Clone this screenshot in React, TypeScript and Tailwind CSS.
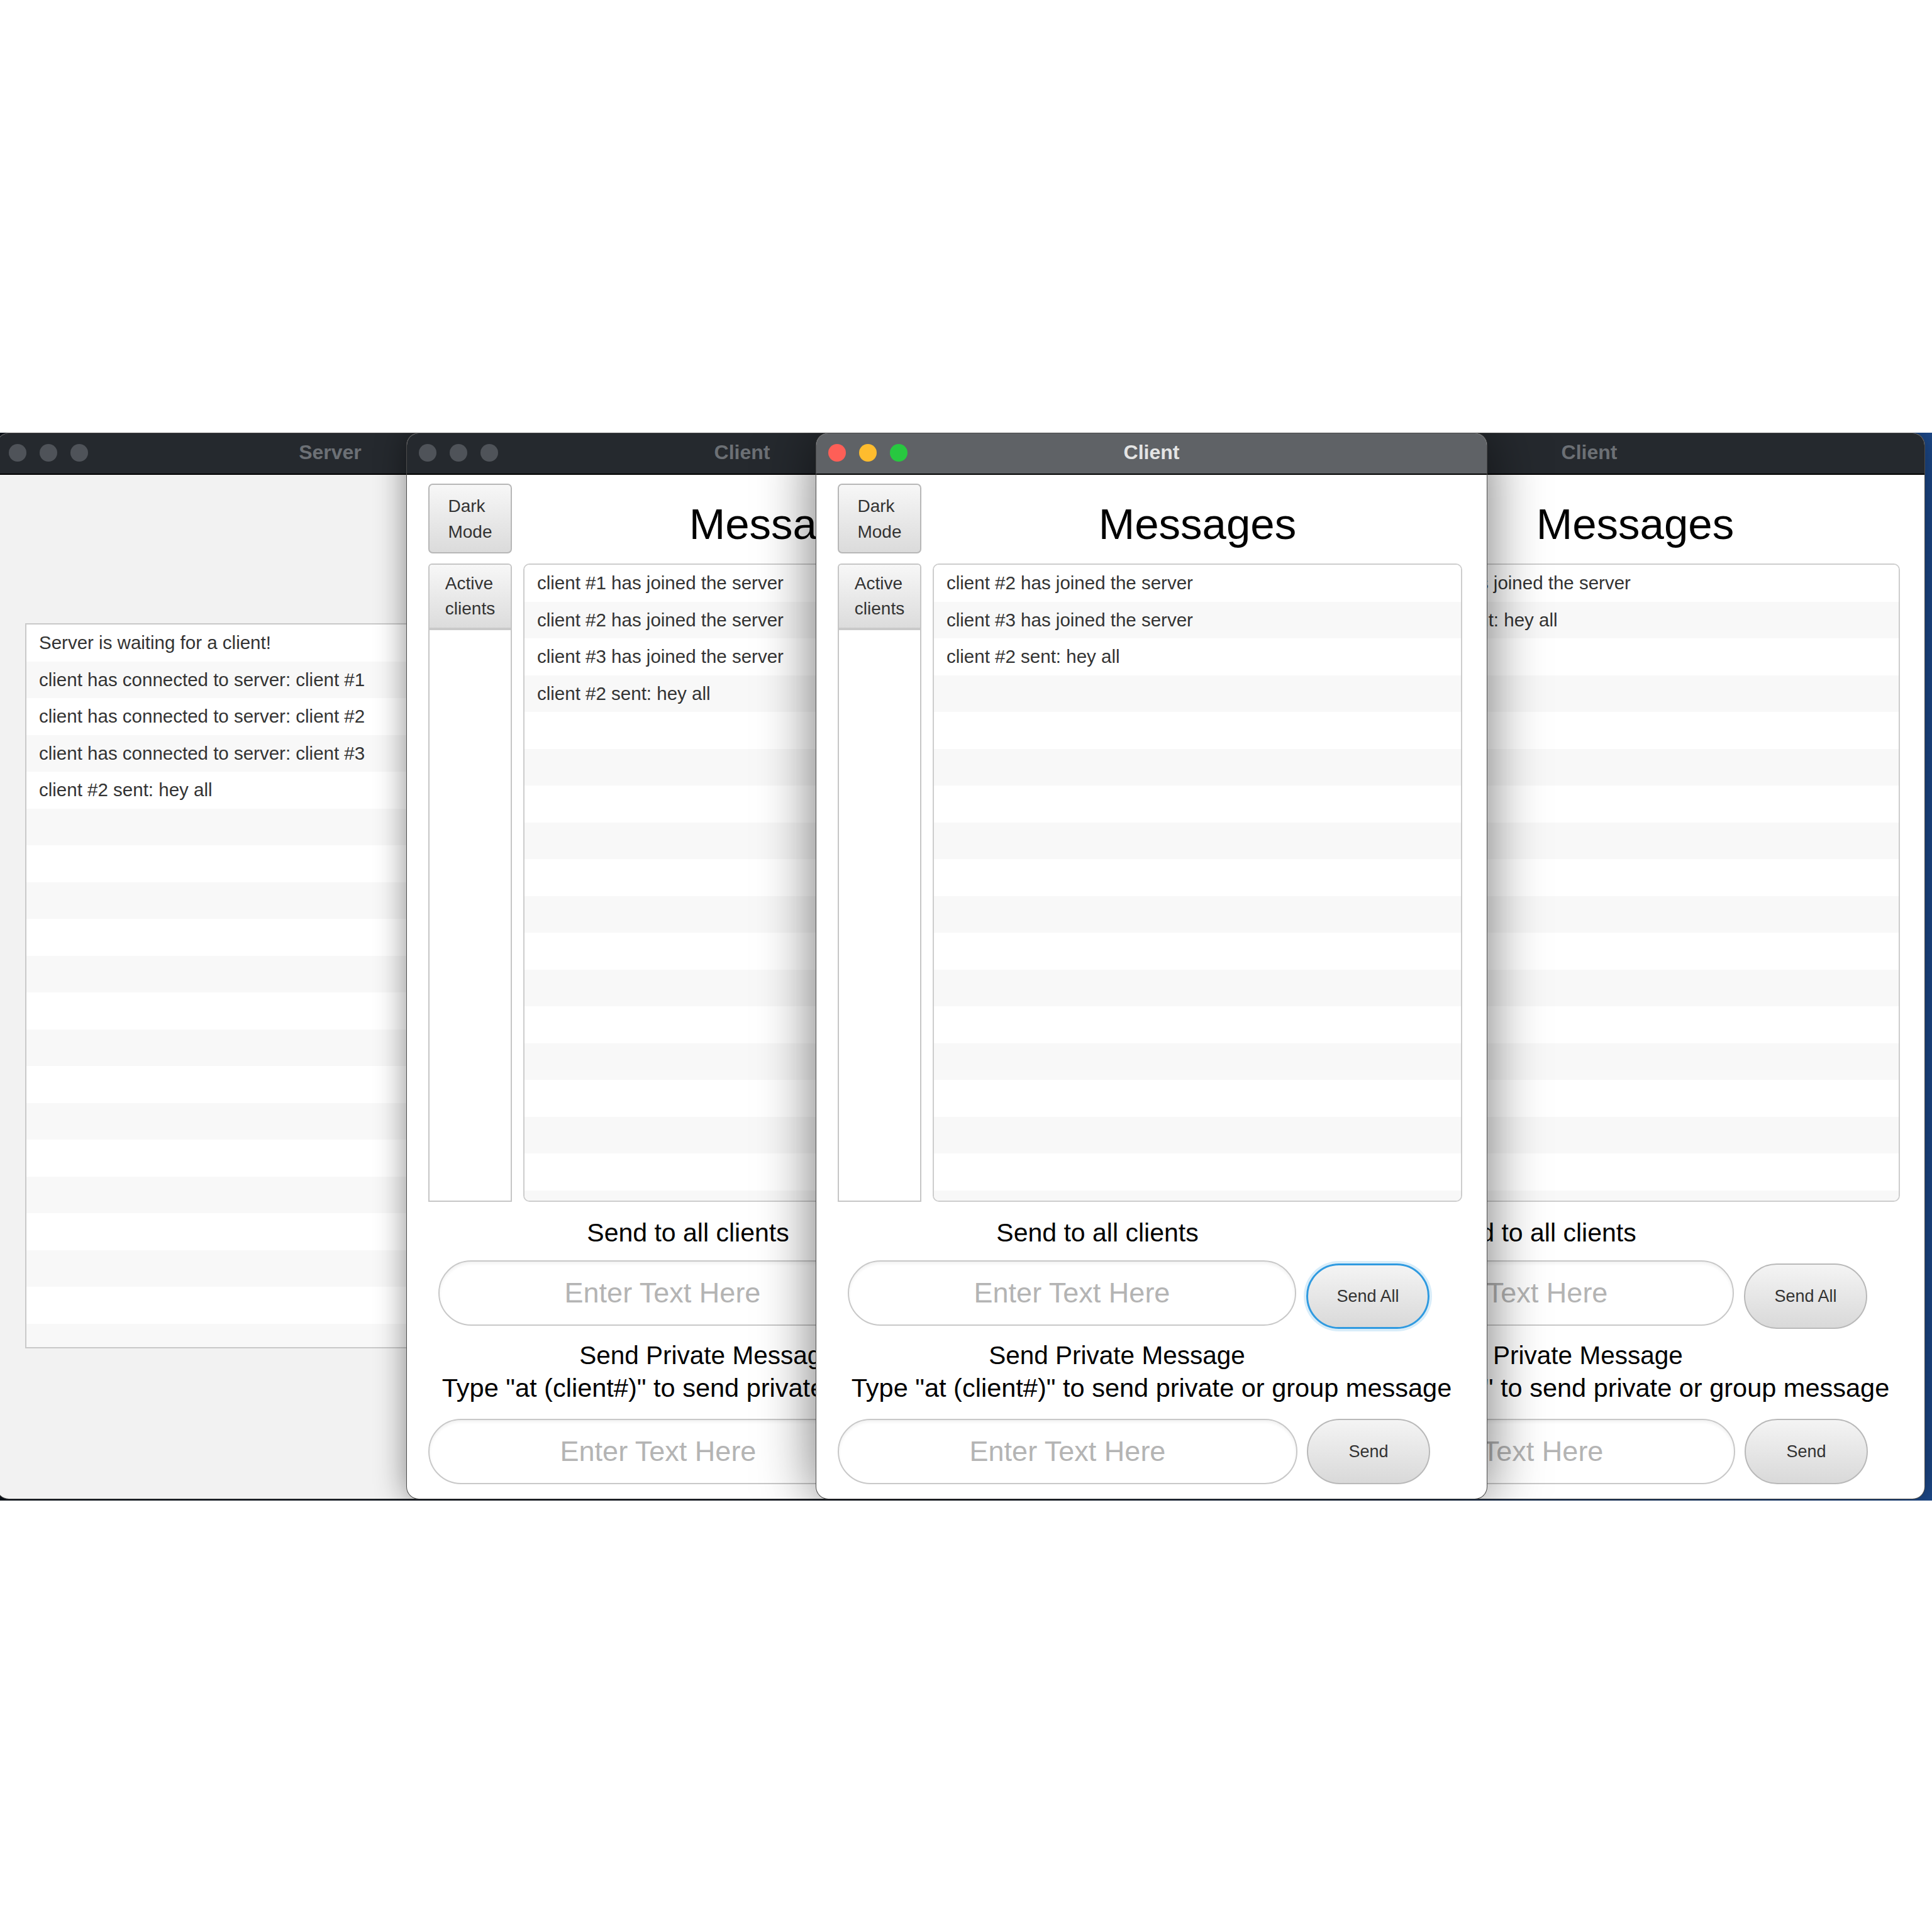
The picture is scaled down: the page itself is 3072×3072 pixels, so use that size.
const FONT = "font-['Liberation_Sans',Arial,sans-serif]";

const serverLog = [
  "Server is waiting for a client!",
  "client has connected to server: client #1",
  "client has connected to server: client #2",
  "client has connected to server: client #3",
  "client #2 sent: hey all",
];

const clients = [
  {
    id: 1,
    pos: "left-[646px] z-10",
    active: false,
    messages: [
      "client #1 has joined the server",
      "client #2 has joined the server",
      "client #3 has joined the server",
      "client #2 sent: hey all",
    ],
  },
  {
    id: 3,
    pos: "left-[1993px] z-20",
    active: false,
    messages: ["client #3 has joined the server", "client #2 sent: hey all"],
  },
  {
    id: 2,
    pos: "left-[1297px] z-30",
    active: true,
    messages: [
      "client #2 has joined the server",
      "client #3 has joined the server",
      "client #2 sent: hey all",
    ],
  },
];

const TitleBar = ({ title, active }: { title: string; active: boolean }) => {
  const lights = active
    ? ["bg-[#fe5f57]", "bg-[#febc2e]", "bg-[#28c840]"]
    : ["bg-[#4f5359]", "bg-[#4f5359]", "bg-[#4f5359]"];
  return (
    <div
      className={`relative h-[66px] shrink-0 flex items-center justify-center pb-[4px] border-b-2 border-black ${
        active ? "bg-[#5f6266]" : "bg-[#25292e]"
      }`}
    >
      <div className="absolute left-[19px] top-0 h-full flex items-center gap-[21px] pb-[2px]">
        {lights.map((c, i) => (
          <div key={i} className={`w-[28px] h-[28px] rounded-full ${c}`} />
        ))}
      </div>
      <span
        className={`text-[32px] font-bold ${FONT} ${
          active ? "text-[#e4e4e4]" : "text-[#6c7075]"
        }`}
      >
        {title}
      </span>
    </div>
  );
};

const Rows = ({ items, count }: { items: string[]; count: number }) => (
  <>
    {[...Array(count)].map((_, i) => (
      <div
        key={i}
        className={`h-[58.5px] shrink-0 flex items-center pl-[20px] text-[29.5px] text-[#333] whitespace-nowrap ${
          i % 2 ? "bg-[#f8f8f8]" : "bg-white"
        }`}
      >
        {items[i] ?? ""}
      </div>
    ))}
  </>
);

const pillButton =
  "shrink-0 w-[196px] h-[104px] rounded-full bg-linear-to-b from-[#f4f4f4] to-[#d9d9d9] text-[27px] text-[#333] flex items-center justify-center";

const field =
  "shrink-0 h-[104px] rounded-full border-2 border-[#c8c8c8] bg-white shadow-[inset_0_3px_5px_rgba(0,0,0,0.06)] flex items-center justify-center text-[45px] text-[#b4b4b4]";

const ClientWindow = ({
  pos,
  active,
  messages,
}: {
  pos: string;
  active: boolean;
  messages: string[];
}) => (
  <div
    className={`absolute top-0 ${pos} w-[1068px] h-[1696px] flex flex-col rounded-[20px] overflow-hidden border border-black/70 bg-white ${
      active
        ? "shadow-[0_0_90px_rgba(0,0,0,0.55)]"
        : "shadow-[0_0_50px_rgba(0,0,0,0.45)]"
    }`}
  >
    <TitleBar title="Client" active={active} />
    <div className={`flex flex-col flex-1 ${FONT}`}>
      <div className="flex h-[141px] shrink-0">
        <button className="ml-[34px] mt-[14px] w-[133px] h-[111px] rounded-[7px] border-2 border-[#b7b7b7] bg-linear-to-b from-[#f7f7f7] to-[#dbdbdb] flex items-center justify-center">
          <span className="inline-block text-left text-[28px] leading-[41px] text-[#333]">
            Dark
            <br />
            Mode
          </span>
        </button>
        <div className="ml-[18px] w-[842px] flex justify-center pt-[44px]">
          <span className="text-[69px] leading-none text-black">Messages</span>
        </div>
      </div>

      <div className="flex h-[1015px] shrink-0">
        <div className="ml-[34px] w-[133px] flex flex-col border-2 border-[#c6c6c6] rounded-t-[6px] bg-white">
          <div className="h-[104px] flex items-center justify-center bg-linear-to-b from-[#f7f7f7] to-[#dcdcdc] border-b-4 border-[#c9c9c9] rounded-t-[5px]">
            <span className="inline-block text-left text-[28px] leading-[40px] text-[#333]">
              Active
              <br />
              clients
            </span>
          </div>
        </div>
        <div className="ml-[18px] w-[842px] flex flex-col border-2 border-[#cdcdcd] rounded-[10px] overflow-hidden bg-white">
          <Rows items={messages} count={18} />
        </div>
      </div>

      <div className="mt-[26px] w-[894px] text-center text-[41px] leading-[46px] text-black whitespace-nowrap">
        Send to all clients
      </div>
      <div className="mt-[21px] flex items-start">
        <div className={`ml-[50px] w-[713px] ${field}`}>Enter Text Here</div>
        <button
          className={`ml-[16px] mt-[5px] ${pillButton} ${
            active
              ? "border-[3px] border-[#2f9ae0] shadow-[0_0_0_4px_rgba(47,154,224,0.18)]"
              : "border-2 border-[#b9b9b9]"
          }`}
        >
          Send All
        </button>
      </div>
      <div className="mt-[19px] w-[956px] text-center text-[40.5px] leading-[46px] text-black whitespace-nowrap">
        Send Private Message
      </div>
      <div className="mt-[6px] w-full text-center text-[41.5px] leading-[46px] text-black whitespace-nowrap">
        {'Type "at (client#)" to send private or group message'}
      </div>
      <div className="mt-[26px] flex items-start">
        <div className={`ml-[34px] w-[731px] ${field}`}>Enter Text Here</div>
        <button className={`ml-[15px] ${pillButton} border-2 border-[#b9b9b9]`}>
          Send
        </button>
      </div>
    </div>
  </div>
);

const ServerWindow = () => (
  <div className="absolute top-0 left-[-6px] z-0 w-[1062px] h-[1696px] flex flex-col rounded-[20px] overflow-hidden border border-black/70 bg-[#f2f2f2]">
    <TitleBar title="Server" active={false} />
    <div className={`pl-[45px] pt-[236px] ${FONT}`}>
      <div className="w-[980px] h-[1153px] flex flex-col border-2 border-[#c9c9c9] bg-white overflow-hidden">
        <Rows items={serverLog} count={20} />
      </div>
    </div>
  </div>
);

export default function App() {
  return (
    <div className="w-[3072px] h-[3072px] bg-white pt-[688px]">
      <div className="relative w-[3072px] h-[1698px] overflow-hidden bg-linear-to-r from-[#0b1118] via-[#0f1722] to-[#1d4a8c]">
        <ServerWindow />
        {clients.map((c) => (
          <ClientWindow key={c.id} pos={c.pos} active={c.active} messages={c.messages} />
        ))}
      </div>
    </div>
  );
}
